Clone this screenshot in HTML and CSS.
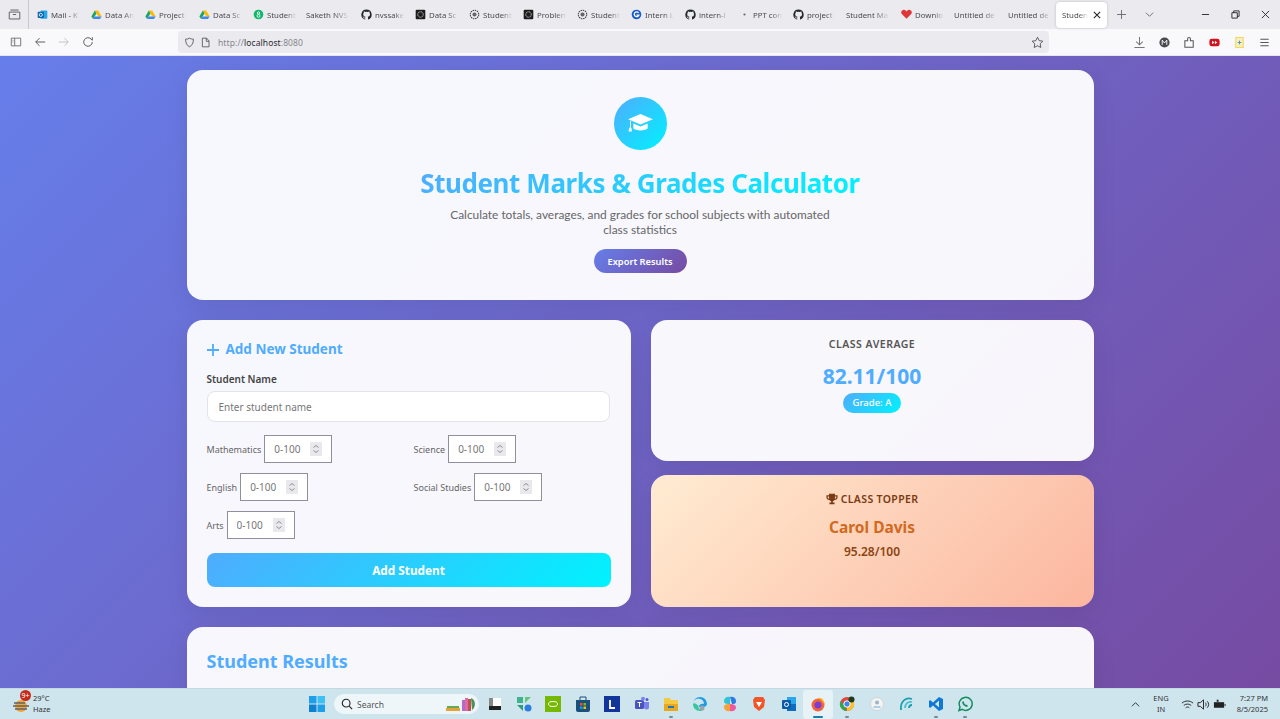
FILE: index.html
```html
<!DOCTYPE html>
<html lang="en">
<head>
<meta charset="utf-8">
<title>Student Marks &amp; Grades Calculator</title>
<link rel="stylesheet" href="styles.css">
</head>
<body>
<svg class="defs" width="0" height="0" aria-hidden="true">
  <symbol id="drive" viewBox="0 0 16 16"><path d="M5.500 2h5l5 9h-5z" fill="#fbbc04"/><path d="M5.500 2 .5 11l2.500 3.500L8 6.500z" fill="#1fa463"/><path d="M5.500 11h10L13 14.500H3z" fill="#4285f4"/></symbol>
  <symbol id="github" viewBox="0 0 16 16"><path fill="#24292f" d="M8 .7a7.500 7.500 0 0 0-2.400 14.600c.4.1.5-.2.5-.4v-1.300c-2.100.5-2.500-1-2.500-1-.4-.9-.9-1.100-.9-1.100-.7-.5 0-.5 0-.5.8 0 1.200.8 1.200.8.700 1.200 1.800.8 2.300.6 0-.5.300-.9.500-1.100-1.700-.2-3.400-.8-3.400-3.700 0-.8.300-1.500.8-2-.1-.2-.3-1 .1-2 0 0 .6-.2 2.100.8a7 7 0 0 1 3.800 0c1.400-1 2.100-.8 2.100-.8.400 1 .1 1.800.1 2 .5.500.8 1.200.8 2 0 2.900-1.800 3.500-3.400 3.700.300.200.5.700.5 1.400v2.100c0 .2.100.5.500.4A7.500 7.500 0 0 0 8 .7"/></symbol>
  <symbol id="ai" viewBox="0 0 16 16"><circle cx="8" cy="8" r="6.200" fill="none" stroke="#444" stroke-width="1.500" stroke-dasharray="2.200 1"/><circle cx="8" cy="8" r="3" fill="#666"/></symbol>
  <symbol id="aibox" viewBox="0 0 16 16"><rect x="1" y="1" width="14" height="14" rx="1.500" fill="#1c1c1c"/><circle cx="8" cy="8" r="4" fill="none" stroke="#ddd" stroke-width="1.300" stroke-dasharray="1.600 .8"/></symbol>
</svg>

<header class="browser">
  <div class="tabstrip">
    <div class="tab-view">
      <svg viewBox="0 0 16 16" width="13" height="13" fill="none" stroke="#555" stroke-width="1.100"><path d="M3 2.500h10M1.500 5h13v8.500h-13zM6 8h4"/></svg>
    </div>
    <div class="tabs">
      <div class="tab"><svg class="fav" viewBox="0 0 16 16"><rect x="5" y="2" width="10" height="12" rx="1" fill="#28a8ea"/><rect x="1" y="4" width="9" height="9" rx="1" fill="#0a64ad"/><circle cx="5.500" cy="8.500" r="2.300" fill="none" stroke="#fff" stroke-width="1.200"/></svg><span class="tab-text">Mail - K</span></div>
      <div class="tab"><svg class="fav"><use href="#drive"/></svg><span class="tab-text">Data An</span></div>
      <div class="tab"><svg class="fav"><use href="#drive"/></svg><span class="tab-text">Project</span></div>
      <div class="tab"><svg class="fav"><use href="#drive"/></svg><span class="tab-text">Data Sc</span></div>
      <div class="tab"><svg class="fav" viewBox="0 0 16 16"><circle cx="8" cy="8" r="7" fill="#12b76a"/><circle cx="8" cy="5.800" r="1.700" fill="none" stroke="#fff" stroke-width="1.200"/><circle cx="8" cy="10" r="2.100" fill="none" stroke="#fff" stroke-width="1.200"/></svg><span class="tab-text">Student</span></div>
      <div class="tab"><span class="tab-text">Saketh NVS</span></div>
      <div class="tab"><svg class="fav"><use href="#github"/></svg><span class="tab-text">nvssake</span></div>
      <div class="tab"><svg class="fav"><use href="#aibox"/></svg><span class="tab-text">Data Sc</span></div>
      <div class="tab"><svg class="fav"><use href="#ai"/></svg><span class="tab-text">Student</span></div>
      <div class="tab"><svg class="fav"><use href="#aibox"/></svg><span class="tab-text">Problem</span></div>
      <div class="tab"><svg class="fav"><use href="#ai"/></svg><span class="tab-text">Student</span></div>
      <div class="tab"><svg class="fav" viewBox="0 0 16 16"><circle cx="8" cy="8" r="7" fill="#1a5fc8"/><path d="M11 5.500A3.500 3.500 0 1 0 11.500 9H8" fill="none" stroke="#fff" stroke-width="1.800"/></svg><span class="tab-text">Intern L</span></div>
      <div class="tab"><svg class="fav"><use href="#github"/></svg><span class="tab-text">intern-l</span></div>
      <div class="tab"><svg class="fav" viewBox="0 0 16 16"><circle cx="8" cy="8" r="1.600" fill="#666"/></svg><span class="tab-text">PPT con</span></div>
      <div class="tab"><svg class="fav"><use href="#github"/></svg><span class="tab-text">project</span></div>
      <div class="tab"><span class="tab-text">Student Ma</span></div>
      <div class="tab"><svg class="fav" viewBox="0 0 16 16"><path d="M8 14 1.500 7.500a3.700 3.700 0 0 1 5.300-5.200L8 3.500l1.200-1.200a3.700 3.700 0 0 1 5.300 5.200z" fill="#e0353a"/></svg><span class="tab-text">Downlo</span></div>
      <div class="tab"><span class="tab-text">Untitled de</span></div>
      <div class="tab"><span class="tab-text">Untitled de</span></div>
      <div class="tab tab-active"><span class="tab-text">Student</span><svg viewBox="0 0 10 10" width="8" height="8" stroke="#222" stroke-width="1.300"><path d="m1 1 8 8M9 1l-8 8"/></svg></div>
    </div>
    <svg class="strip-icon strip-plus" viewBox="0 0 10 10" stroke="#666" fill="none"><path d="M5 0v10M0 5h10"/></svg>
    <svg class="strip-icon strip-down" viewBox="0 0 10 10" stroke="#666" fill="none"><path d="m1 3 4 4 4-4"/></svg>
    <div class="win-controls">
      <svg viewBox="0 0 10 10" stroke="#222" fill="none"><path d="M1 5h8"/></svg>
      <svg viewBox="0 0 10 10" stroke="#222" fill="none"><path d="M1 3h6v6H1zM3 3V1h6v6H7"/></svg>
      <svg viewBox="0 0 10 10" stroke="#222" fill="none"><path d="m1 1 8 8M9 1 1 9"/></svg>
    </div>
  </div>
  <div class="toolbar">
    <div class="nav">
      <svg viewBox="0 0 14 14" fill="none" stroke="#666"><path d="M1.500 2.500h11v9h-11zM5.500 2.500v9M3 5h1M3 7h1"/></svg>
      <svg viewBox="0 0 14 14" fill="none" stroke="#555" stroke-width="1.100"><path d="M13 7H2M6.500 2.500 2 7l4.500 4.500"/></svg>
      <svg viewBox="0 0 14 14" fill="none" stroke="#c0c0c6" stroke-width="1.100"><path d="M1 7h11M7.500 2.500 12 7l-4.500 4.500"/></svg>
      <svg viewBox="0 0 14 14" fill="none" stroke="#555" stroke-width="1.100"><path d="M12 7a5 5 0 1 1-1.500-3.600L12 5V1.500"/></svg>
    </div>
    <div class="urlbar">
      <svg viewBox="0 0 14 14" fill="none" stroke="#555" stroke-width="1.100"><path d="M7 1.500c1.500 1 3.500 1.300 5 1.300 0 4.500-1.500 8-5 9.700-3.500-1.700-5-5.200-5-9.700 1.500 0 3.500-.3 5-1.300z"/></svg>
      <svg viewBox="0 0 14 14" fill="none" stroke="#555" stroke-width="1.100"><path d="M3 1.500h5.500L11.500 5v7.500H3zM8 1.500V5.500h3.500"/></svg>
      <span class="url"><span class="url-dim">http://</span>localhost<span class="url-dim">:8080</span></span>
      <svg class="url-star" viewBox="0 0 14 14" fill="none" stroke="#555" stroke-width="1"><path d="m7 1.300 1.800 3.700 4 .6-2.900 2.800.7 4L7 10.500l-3.600 1.900.7-4-2.900-2.800 4-.6z"/></svg>
    </div>
    <div class="tools">
      <svg viewBox="0 0 14 14" fill="none" stroke="#777" stroke-width="1.100"><path d="M7 1v8M3.500 6 7 9.500 10.500 6M1.500 12.500h11"/></svg>
      <svg viewBox="0 0 14 14"><circle cx="7" cy="7" r="5.500" fill="#4a4a4f"/><path d="M4.500 9.500v-5L7 7.500l2.500-3v5" fill="none" stroke="#fff"/></svg>
      <svg viewBox="0 0 14 14" fill="none" stroke="#555" stroke-width="1.100"><path d="M2 5h3V3a1.500 1.500 0 0 1 3 0v2h3v7H2z"/></svg>
      <svg viewBox="0 0 14 14"><rect x="1.500" y="3" width="11" height="8" rx="2.500" fill="#d3111c"/><path d="M4.500 5v4L7 7zM7.500 5v4L10 7z" fill="#fff"/></svg>
      <svg viewBox="0 0 14 14"><rect x="3" y="1.500" width="8" height="11" fill="#f9f0b8" stroke="#eed35a"/><path d="M5 7h4M7 5v4" stroke="#4a90c8"/></svg>
      <svg viewBox="0 0 14 14" fill="none" stroke="#555" stroke-width="1.100"><path d="M2.500 3.500h9M2.500 7h9M2.500 10.500h9"/></svg>
    </div>
  </div>
</header>

<main class="viewport">
  <div class="container">
    <section class="card hero">
      <div class="hero-icon">
        <svg viewBox="0 0 28 22" width="27" height="21" fill="#fff"><path d="M14 1 1 6.500l13 5.500 13-5.500z"/><path d="M6.500 11v5c2 3 13 3 15 0v-5L14 14.200z"/><path d="M3 8v7.500H2l-.5 4h3.500l-.5-4H4V8.500z"/></svg>
      </div>
      <h1 class="hero-title">Student Marks &amp; Grades Calculator</h1>
      <p class="hero-sub">Calculate totals, averages, and grades for school subjects with automated class statistics</p>
      <button class="export-btn">Export Results</button>
    </section>

    <div class="columns">
      <section class="card form-card">
        <h2 class="form-title"><svg viewBox="0 0 12 12" width="12" height="12" stroke="#4facfe" stroke-width="1.800" fill="none"><path d="M6 0v12M0 6h12"/></svg>Add New Student</h2>
        <label class="name-label" for="name">Student Name</label>
        <input class="name-input" id="name" type="text" placeholder="Enter student name">
        <div class="subjects">
          <div class="subject"><label>Mathematics</label><div class="num"><input type="text" placeholder="0-100"><span class="spin"><svg viewBox="0 0 8 10" fill="none" stroke="#777" stroke-width=".8"><path d="m1.500 3.500 2.500-2 2.500 2M1.500 6.500l2.500 2 2.500-2"/></svg></span></div></div>
          <div class="subject"><label>Science</label><div class="num"><input type="text" placeholder="0-100"><span class="spin"><svg viewBox="0 0 8 10" fill="none" stroke="#777" stroke-width=".8"><path d="m1.500 3.500 2.500-2 2.500 2M1.500 6.500l2.500 2 2.500-2"/></svg></span></div></div>
          <div class="subject"><label>English</label><div class="num"><input type="text" placeholder="0-100"><span class="spin"><svg viewBox="0 0 8 10" fill="none" stroke="#777" stroke-width=".8"><path d="m1.500 3.500 2.500-2 2.500 2M1.500 6.500l2.500 2 2.500-2"/></svg></span></div></div>
          <div class="subject"><label>Social Studies</label><div class="num"><input type="text" placeholder="0-100"><span class="spin"><svg viewBox="0 0 8 10" fill="none" stroke="#777" stroke-width=".8"><path d="m1.500 3.500 2.500-2 2.500 2M1.500 6.500l2.500 2 2.500-2"/></svg></span></div></div>
          <div class="subject"><label>Arts</label><div class="num"><input type="text" placeholder="0-100"><span class="spin"><svg viewBox="0 0 8 10" fill="none" stroke="#777" stroke-width=".8"><path d="m1.500 3.500 2.500-2 2.500 2M1.500 6.500l2.500 2 2.500-2"/></svg></span></div></div>
        </div>
        <button class="add-btn">Add Student</button>
      </section>

      <div class="stats">
        <section class="card avg-card">
          <h3 class="avg-label">CLASS AVERAGE</h3>
          <div class="avg-value">82.11/100</div>
          <span class="grade">Grade: A</span>
        </section>
        <section class="card topper-card">
          <h3 class="topper-label"><svg viewBox="0 0 14 14" width="12" height="12" fill="#7a3a12"><path d="M3.500 1h7v1.500h3V5c0 2-1.500 3-3.400 3.200A3.500 3.500 0 0 1 8 9.700V11h2v2H4v-2h2V9.700a3.500 3.500 0 0 1-2.100-1.500C2 8 .5 7 .5 5V2.500h3zM2 4v1c0 .8.600 1.400 1.700 1.600L3.500 4zm10 0h-1.500l-.2 2.600C11.400 6.400 12 5.800 12 5z"/></svg>CLASS TOPPER</h3>
          <div class="topper-name">Carol Davis</div>
          <div class="topper-score">95.28/100</div>
        </section>
      </div>
    </div>

    <section class="card results">
      <h2 class="results-title">Student Results</h2>
    </section>
  </div>
</main>

<footer class="taskbar">
  <div class="weather">
    <svg class="weather-icon" viewBox="0 0 20 20"><circle cx="9" cy="12" r="6" fill="#f0a53a"/><path d="M2 9h11M1 12h16M3 15h12" stroke="#5f6368" stroke-width="1.500"/></svg>
    <span class="badge">9+</span>
    <div class="weather-text"><span>29°C</span><span>Haze</span></div>
  </div>
  <div class="center">
    <svg class="win" viewBox="0 0 16 16"><path fill="#1f9fe8" d="M0 0h7.500v7.500H0z"/><path fill="#3fc0f5" d="M8.500 0H16v7.500H8.500z"/><path fill="#0f7fd0" d="M0 8.500h7.500V16H0z"/><path fill="#1f9fe8" d="M8.500 8.500H16V16H8.500z"/></svg>
    <div class="search">
      <svg viewBox="0 0 14 14" width="12" height="12" fill="none" stroke="#222" stroke-width="1.300"><circle cx="6" cy="6" r="4.500"/><path d="m9.500 9.500 3.500 3.500"/></svg>
      <span class="search-text">Search</span>
      <svg class="search-art" viewBox="0 0 34 16"><path d="M1 12h14v3H1z" fill="#e4a23c"/><path d="M2 10h12v2H2z" fill="#6aa84f"/><path d="M17 4h3v11h-3z" fill="#b06ad0"/><path d="M20 2h3v13h-3z" fill="#e06aa0"/><path d="M23 3h3v12h-3z" fill="#c0504d"/><path d="M26 2c4 1 6 8 1 12z" fill="#4e8f5a"/></svg>
    </div>
    <div class="apps">
      <span class="app"><svg viewBox="0 0 16 16"><rect x="2" y="2" width="12" height="12" fill="#fff"/><rect x="2" y="10" width="12" height="4" fill="#222"/><rect x="2" y="2" width="4" height="8" fill="#888"/></svg></span>
      <span class="app"><svg viewBox="0 0 16 16"><path d="M1 1h6v6H1z" fill="#3fb28f"/><path d="M9 1h6L9 7z" fill="#63c67a"/><path d="M1 9h6v6z" fill="#2f9e7f"/><circle cx="12" cy="12" r="3.500" fill="#2b7de0"/></svg></span>
      <span class="app"><svg viewBox="0 0 16 16"><rect width="16" height="16" fill="#76b900"/><ellipse cx="8" cy="8" rx="4.500" ry="2.500" fill="none" stroke="#fff"/></svg></span>
      <span class="app"><svg viewBox="0 0 16 16"><path d="M1 4h14v10a2 2 0 0 1-2 2H3a2 2 0 0 1-2-2z" fill="#1b4f7c"/><path d="M5 4V1h6v3" fill="none" stroke="#1b4f7c"/><rect x="5" y="7" width="2.500" height="2.500" fill="#f25022"/><rect x="8.500" y="7" width="2.500" height="2.500" fill="#7fba00"/><rect x="5" y="10.500" width="2.500" height="2.500" fill="#00a4ef"/><rect x="8.500" y="10.500" width="2.500" height="2.500" fill="#ffb900"/></svg></span>
      <span class="app"><svg viewBox="0 0 16 16"><rect width="16" height="16" fill="#12359c"/><path d="M6 4v8h5" fill="none" stroke="#fff" stroke-width="1.800"/></svg></span>
      <span class="app"><svg viewBox="0 0 16 16"><rect x="1" y="4" width="9" height="9" rx="1.500" fill="#4b53bc"/><circle cx="9" cy="2.800" r="2" fill="#7b83eb"/><path d="M10 6h5v5a2.500 2.500 0 0 1-5 0z" fill="#7b83eb"/><circle cx="13" cy="3.500" r="1.500" fill="#5059c9"/><path d="M3.500 6.500h4M5.500 6.500V11" stroke="#fff"/></svg></span>
      <span class="app app-dot"><svg viewBox="0 0 16 16"><path d="M1 2h6l1 2h7v11H1z" fill="#f6c945"/><rect x="1" y="8" width="14" height="7" fill="#e8a91e"/><rect x="5" y="10" width="6" height="2" fill="#1a78c2"/></svg></span>
      <span class="app"><svg viewBox="0 0 16 16"><path d="M1 8a7 7 0 0 1 14 0c0 2-2 3-4 3H7c0-3 3-3.500 5-3a5 5 0 0 0-11 0z" fill="#1b9de2"/><path d="M1 8c0 4 3 7 7 7 1 0 2 0 3-1-3 .5-5-1-4.500-4C5 8 2 6 1 8z" fill="#37c6a0"/><circle cx="10" cy="12" r="2.500" fill="#9aa4ad"/></svg></span>
      <span class="app"><svg viewBox="0 0 16 16"><path d="M8 1c3-1 6 1 6 4s-2 3-4 3z" fill="#2f7be5"/><path d="M8 8c3 0 6 1 6 3.500S11 16 8 15z" fill="#f05a9d"/><path d="M8 1C5 0 2 2 2 5s3 3 6 3z" fill="#34c3d6"/><path d="M8 15c-3 1-6-1-6-4s3-3 6-3z" fill="#f7a13c"/></svg></span>
      <span class="app"><svg viewBox="0 0 16 16"><path d="M4 1h8l2 3-1 7-5 4-5-4-1-7z" fill="#f1562b"/><path d="M5 6h6L8 11z" fill="#fff"/></svg></span>
      <span class="app"><svg viewBox="0 0 16 16"><path d="M6 1h9v14H6z" fill="#28a8ea"/><path d="M6 8h9v7H6z" fill="#0f6cbd"/><rect x="1" y="4" width="9" height="9" rx="1" fill="#0a5ba8"/><circle cx="5.500" cy="8.500" r="2" fill="none" stroke="#fff"/></svg></span>
      <span class="app app-active"><svg viewBox="0 0 16 16"><circle cx="8" cy="9" r="6.500" fill="#f2643a"/><circle cx="8" cy="9" r="3.500" fill="#7a3fd0"/><path d="M8 2c4-1 7 3 6.500 7-1-3-3-5-6.500-7z" fill="#ffb52b"/></svg></span>
      <span class="app app-dot"><svg viewBox="0 0 16 16"><circle cx="8" cy="8" r="7" fill="#dd4b3e"/><path d="M8 15A7 7 0 0 1 1.500 5L5 9z" fill="#2fa84f"/><path d="M8 15a7 7 0 0 0 6.500-10H8z" fill="#fbc02d"/><circle cx="8" cy="8" r="3.200" fill="#3f86e8" stroke="#fff"/><circle cx="12.500" cy="3.500" r="3" fill="#1d3a1f"/></svg></span>
      <span class="app"><svg viewBox="0 0 16 16"><circle cx="8" cy="8" r="6.500" fill="#f3f3f3" stroke="#cfd6da"/><circle cx="8" cy="6.500" r="2" fill="#9fb4c4"/><path d="M4.500 11h7" stroke="#6fa8d8"/></svg></span>
      <span class="app"><svg viewBox="0 0 16 16" fill="none" stroke-width="1.800"><path d="M14 3C8 1 2 5 3 14" stroke="#1e9fb0"/><path d="M14 6c-4-1-7 2-7 6" stroke="#42c0d0"/><path d="M14 9c-2 0-3 1-3 3" stroke="#1e9fb0"/></svg></span>
      <span class="app app-dot"><svg viewBox="0 0 16 16"><path d="M11 1 15 3v10l-4 2-6-5.500-3 2.500-1-1V5l1-1 3 2.500z" fill="#0f78d4"/><path d="M11 4.500 7 8l4 3.500z" fill="#cfe5ee"/></svg></span>
      <span class="app app-dot"><svg viewBox="0 0 16 16" fill="none" stroke="#128c5e" stroke-width="1.500"><path d="M2 14.500 3 11a6.500 6.500 0 1 1 2.300 2.400z"/><path d="M6 5.500c0 2.500 2 4.500 4.500 4.500" stroke-width="1.800"/></svg></span>
    </div>
  </div>
  <div class="tray">
    <svg class="tray-chev" viewBox="0 0 10 10" fill="none" stroke="#222"><path d="m1 7 4-4 4 4"/></svg>
    <div class="lang"><span>ENG</span><span>IN</span></div>
    <div class="tray-icons">
      <svg viewBox="0 0 14 14" fill="none" stroke="#222"><path d="M1 5.500c3.500-3 8.500-3 12 0M3 8c2.500-2 5.500-2 8 0M5 10.500c1.200-1 2.800-1 4 0"/></svg>
      <svg viewBox="0 0 14 14" fill="none" stroke="#222"><path d="M1 5v4h2.500L7 12V2L3.500 5zM9 5c1 1 1 3 0 4M11 3.500c2 2 2 5 0 7"/></svg>
      <svg viewBox="0 0 14 14" fill="#222"><path d="M1 4.500h11v6H1z"/><path d="M12.500 6.500h1v2h-1zM4 2h2v2H4z"/></svg>
    </div>
    <div class="clock"><span>7:27 PM</span><span>8/5/2025</span></div>
  </div>
</footer>
</body>
</html>
```

FILE: styles.css
```css
* { box-sizing: border-box; }
html, body { height: 100%; }
body {
  margin: 0;
  display: flex;
  flex-direction: column;
  overflow: hidden;
  font-family: "Noto Sans", "Open Sans", sans-serif;
  color: #333;
}
.defs { display: block; height: 0; }

/* Browser chrome */
.browser { flex: none; height: 56px; display: flex; flex-direction: column; }
.tabstrip { height: 29px; background: #ebebef; display: flex; align-items: center; position: relative; }
.tab-view { width: 29px; height: 29px; flex: none; display: flex; align-items: center; justify-content: center; border-right: 1px solid #c8c8ce; }
.tabs { display: flex; align-items: center; margin-left: 3px; flex: none; }
.tab { width: 54px; height: 27px; flex: none; display: flex; align-items: center; gap: 3px; padding: 0 4px; font-size: 7.800px; color: #4a4a4e; overflow: hidden; white-space: nowrap; }
.fav { width: 11px; height: 11px; flex: none; margin-left: 1px; }
.tab-text { flex: 1; overflow: hidden; -webkit-mask-image: linear-gradient(90deg, #000 60%, transparent 95%); mask-image: linear-gradient(90deg, #000 60%, transparent 95%); }
.tab-active { width: 51px; height: 26px; margin-left: -2px; background: #fff; border-radius: 4px; box-shadow: 0 0 3px rgba(0,0,0,.2); padding: 0 6px; gap: 3px; }
.strip-icon { width: 9px; height: 9px; flex: none; }
.strip-plus { margin-left: 10px; }
.strip-down { margin-left: 19px; }
.win-controls { margin-left: auto; display: flex; }
.win-controls svg { width: 9px; height: 9px; margin: 0 10.500px; }

.toolbar { height: 27px; background: #f9f9fb; display: flex; align-items: center; border-bottom: 1px solid #e6e6ea; }
.nav { display: flex; width: 178px; padding-left: 10px; gap: 12px; flex: none; }
.nav svg { width: 12px; height: 12px; flex: none; }
.urlbar { width: 871px; height: 22px; flex: none; background: #ebebef; border-radius: 4px; display: flex; align-items: center; padding: 0 5px 0 6px; gap: 5px; font-size: 8.500px; color: #2a2a2e; }
.urlbar svg { width: 11px; height: 11px; flex: none; }
.url { margin-left: 2px; letter-spacing: .1px; }
.url-dim { color: #85858c; }
.url-star.url-star { margin-left: auto; width: 13px; height: 13px; }
.tools { display: flex; flex: 1; padding-left: 84px; gap: 12px; }
.tools svg { width: 13px; height: 13px; flex: none; }

/* Page */
.viewport { flex: 1; min-height: 0; overflow: hidden; background: linear-gradient(135deg, #667eea 0%, #764ba2 100%); }
.container { width: 907px; margin: 14px auto 0; display: flex; flex-direction: column; gap: 20px; }
.card { background: rgba(255,255,255,.95); border-radius: 16px; box-shadow: 0 6px 24px rgba(0,0,0,.08); }

.hero { height: 230px; padding-top: 27px; display: flex; flex-direction: column; align-items: center; }
.hero-icon { width: 53px; height: 53px; border-radius: 50%; background: linear-gradient(135deg, #4facfe, #00f2fe); display: flex; align-items: center; justify-content: center; }
.hero-title { margin: 15px 0 0; font-size: 26px; line-height: 37px; font-weight: 700; letter-spacing: -.42px; background: linear-gradient(135deg, #4facfe, #00f2fe); -webkit-background-clip: text; background-clip: text; color: transparent; }
.hero-sub { margin: 5px 0 0; width: 400px; text-align: center; font-family: Lato, "Noto Sans", sans-serif; font-size: 11.900px; line-height: 15px; color: #666; }
.export-btn { margin-top: 12px; height: 24px; width: 93px; padding: 0; border: 0; border-radius: 12px; background: linear-gradient(135deg, #667eea, #764ba2); color: #fff; font: 600 9.300px "Noto Sans", sans-serif; }

.columns { display: grid; grid-template-columns: 444px 443px; gap: 20px; height: 287px; }
.form-card { padding: 20px; display: flex; flex-direction: column; }
.form-title { margin: 0; display: flex; align-items: center; gap: 7px; font-size: 13.500px; line-height: 19px; font-weight: 700; color: #4facfe; }
.name-label { margin-top: 13px; font-size: 10px; line-height: 14px; font-weight: 600; color: #444; }
.name-input { margin-top: 5px; width: 403px; height: 31px; padding: 0 11px; border: 1px solid #e3e3ea; border-radius: 8px; background: #fff; font: 10px "Noto Sans", sans-serif; }
.name-input::placeholder, .num input::placeholder { color: #777; opacity: 1; }
.subjects { margin-top: 13px; display: grid; grid-template-columns: 1fr 1fr; gap: 10px; }
.subject { display: flex; align-items: center; gap: 3px; font-size: 9px; color: #666; }
.num { width: 68px; height: 28px; flex: none; display: flex; align-items: center; border: 1px solid #8f8f9d; background: #fff; padding: 0 9px; }
.num input { width: 36px; flex: none; padding: 0; border: 0; background: none; outline: none; font: 10px "Noto Sans", sans-serif; }
.spin { margin-left: auto; width: 12px; height: 14px; background: #e9e9ed; display: flex; align-items: center; justify-content: center; }
.spin svg { width: 8px; height: 10px; }
.add-btn { margin-top: 14px; width: 404px; height: 34px; padding: 0; border: 0; border-radius: 8px; background: linear-gradient(135deg, #4facfe, #00f2fe); color: #fff; font: 700 11.800px "Noto Sans", sans-serif; }

.stats { display: flex; flex-direction: column; gap: 14px; }
.avg-card { height: 141px; padding-top: 17px; text-align: center; }
.avg-label { margin: 0; font-size: 10.500px; line-height: 14px; font-weight: 600; color: #555; letter-spacing: .5px; }
.avg-value { margin-top: 11px; font-size: 21px; line-height: 29px; font-weight: 700; color: #4facfe; }
.grade { display: block; margin: 2px auto 0; width: 58px; height: 20px; border-radius: 10px; background: linear-gradient(135deg, #4facfe, #00f2fe); color: #fff; font-size: 9.500px; font-weight: 500; line-height: 20px; }
.topper-card { flex: 1; padding-top: 17px; text-align: center; background: linear-gradient(135deg, #ffecd2, #fcb69f); }
.topper-label { margin: 0; display: flex; justify-content: center; align-items: center; gap: 3px; font-size: 10.500px; line-height: 14px; font-weight: 600; color: #7a3a12; letter-spacing: .35px; }
.topper-name { margin-top: 10px; font-size: 15.500px; line-height: 22px; font-weight: 700; color: #d2691e; }
.topper-score { margin-top: 6px; font-size: 12px; line-height: 16px; font-weight: 600; color: #8b4513; }

.results { height: 200px; padding: 21px 20px; }
.results-title { margin: 0; font-size: 18px; line-height: 26px; font-weight: 700; color: #4facfe; }

/* Taskbar */
.taskbar { flex: none; height: 31px; background: #cfe5ee; border-top: 1px solid #c5d8e2; display: flex; align-items: center; position: relative; }
.weather { width: 300px; flex: none; display: flex; align-items: center; padding-left: 12px; position: relative; }
.weather-icon { width: 20px; height: 20px; flex: none; }
.badge { position: absolute; left: 20px; top: -3px; width: 11px; height: 11px; border-radius: 50%; background: #c42b1c; color: #fff; font-size: 7px; line-height: 11px; text-align: center; }
.weather-text { display: flex; flex-direction: column; margin-left: 1px; font-size: 7.500px; line-height: 11px; color: #333; }
.center { display: flex; align-items: center; }
.win { width: 16px; height: 16px; margin-left: 9px; flex: none; }
.search { width: 145px; height: 20px; margin-left: 9px; border-radius: 10px; background: #eef6f9; display: flex; align-items: center; padding-left: 7px; font-size: 8.500px; color: #555; flex: none; }
.search-text { margin-left: 4px; }
.search-art { width: 34px; height: 16px; margin-left: auto; }
.apps { display: flex; margin-left: 1px; }
.app { width: 29.400px; height: 29px; flex: none; display: flex; align-items: center; justify-content: center; position: relative; }
.app svg { width: 16px; height: 16px; }
.app-active { background: rgba(255,255,255,.5); border-radius: 3px; }
.app-active::after, .app-dot::after { content: ""; position: absolute; bottom: 1px; left: 50%; height: 2px; border-radius: 1px; }
.app-active::after { width: 10px; margin-left: -5px; background: #1a7fb0; }
.app-dot::after { width: 4px; margin-left: -2px; background: #7a8a93; }
.tray { margin-left: auto; display: flex; align-items: center; height: 100%; }
.tray-chev { width: 9px; height: 9px; flex: none; }
.lang { margin-left: 13px; display: flex; flex-direction: column; align-items: center; font-size: 7.500px; line-height: 11px; color: #333; }
.tray-icons { margin-left: 12px; display: flex; gap: 3px; }
.tray-icons svg { width: 13px; height: 13px; }
.clock { margin: 0 12px 0 11px; display: flex; flex-direction: column; align-items: flex-end; font-size: 7.500px; line-height: 11px; color: #333; }
```
